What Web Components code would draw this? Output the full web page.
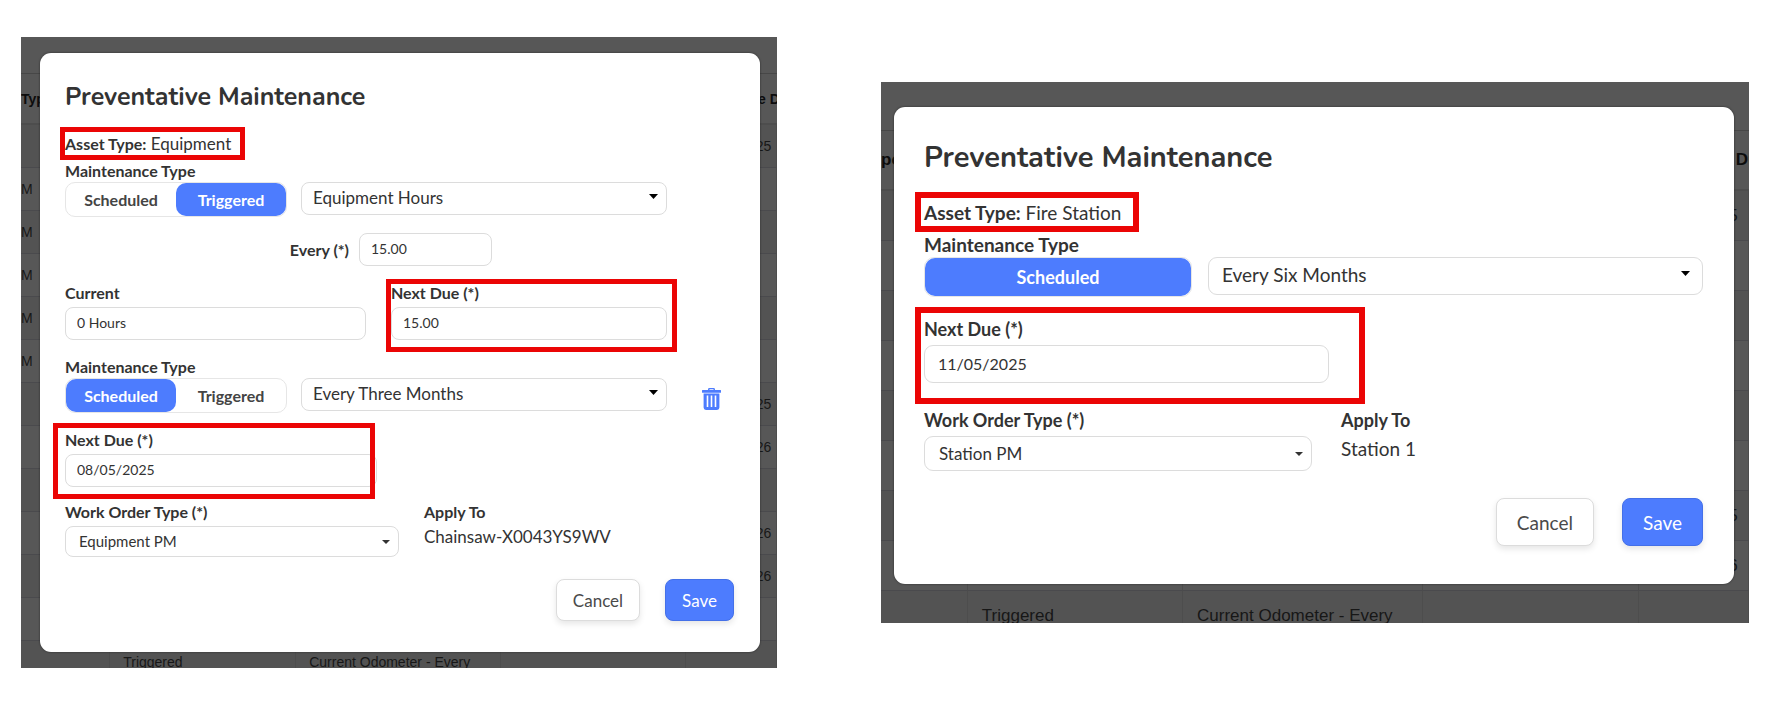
<!DOCTYPE html>
<html lang="en">
<head>
<meta charset="utf-8">
<title>Preventative Maintenance</title>
<style>
    body {
        margin: 0;
        padding: 37px 38px 37px 21px;
        display: grid;
        grid-template-columns: 756fr 868fr;
        column-gap: 104px;
        align-items: start;
        background: #fff;
        color: #333;
        font-family: Lato, sans-serif;
    }
    .equipment {
        --stage-pad: 16px 17px 16px 19px;
        --dialog-pad: 26px 26px 31px 25px;
        --title-size: 25px;
        --title-line: 36px;
        --title-gap: 17px;
        --radius: 8px;
        --label-size: 16px;
        --label-line: 22px;
        --lead-size: 16px;
        --text-size: 17px;
        --input-size: 14px;
        --input-height: 33px;
        --input-pad: 11px;
        --arrow-right: 9px;
        --arrow-top: 12px;
        --toggle-height: 35px;
        --compact-height: 31px;
        --compact-pad: 13px;
        --compact-size: 15px;
        --button-height: 42px;
        --button-pad: 16px;
        --button-gap: 25px;
        --actions-gap: 22px;
        --frame: 5px;
        --table-size: 14px;
        --table-top: 36px;
        --head-height: 52px;
        --row-height: 43px;
        --cell-pad: 13px;
        --last-pad: 15px;
    }
    .station {
        margin-top: 45px;
        --stage-pad: 25px 15px 39px 13px;
        --dialog-pad: 29px 31px 38px 30px;
        --title-size: 29px;
        --title-line: 44px;
        --title-gap: 19px;
        --radius: 9px;
        --label-size: 18px;
        --label-line: 25px;
        --lead-size: 19px;
        --text-size: 19px;
        --input-size: 16px;
        --input-height: 38px;
        --input-pad: 13px;
        --arrow-right: 13px;
        --arrow-top: 14px;
        --toggle-height: 40px;
        --compact-height: 35px;
        --compact-pad: 14px;
        --compact-size: 17px;
        --button-height: 48px;
        --button-pad: 20px;
        --button-gap: 28px;
        --actions-gap: 27px;
        --frame: 6px;
        --table-size: 17px;
        --table-top: 48px;
        --head-height: 61px;
        --row-height: 50px;
        --cell-pad: 14px;
        --last-pad: 14px;
    }
    .asset {
        width: fit-content;
        font-size: var(--text-size);
        line-height: 24px;
    }
    .station .asset {
        line-height: 28px;
    }
    .asset b {
        font-size: var(--lead-size);
    }
    .form {
        display: flex;
        flex-direction: column;
        gap: 16px;
        margin: 4px 0 14px;
    }
    .station .form {
        gap: 20px;
        margin: 5px 0 25px;
    }
    .every { display: grid; grid-template-columns: 427fr 242fr; }
    .pair { display: grid; grid-template-columns: 301fr 276fr 42fr; column-gap: 25px; }
    .single { display: grid; grid-template-columns: 312fr 357fr; }
    .station .single { grid-template-columns: 405fr 374fr; }
    .order { display: grid; grid-template-columns: 334fr 310fr; column-gap: 25px; }
    .station .order { grid-template-columns: 388fr 362fr; column-gap: 29px; }
</style>
</head>
<body>

<pm-stage class="equipment" columns="11.8|24.6|27.1|24.5" first="|M|M|M|M|M|||||||" dates="08/05/2025||||||08/05/2025|02/05/2026||02/05/2026|02/05/2026||">
    <pm-dialog heading="Preventative Maintenance">
        <pm-callout class="asset" style="--inset: -5px -14px -4px -5px"><b>Asset Type:</b> Equipment</pm-callout>
        <div class="form">
            <pm-trigger options="Scheduled|Triggered" active="Triggered" value="Equipment Hours" style="--columns: 222fr 366fr 53fr; --gap: 14px"></pm-trigger>
            <div class="every"><pm-field label="Every (*)" value="15.00" inline></pm-field></div>
            <div class="pair">
                <pm-field label="Current" value="0 Hours"></pm-field>
                <pm-callout style="--inset: -3px -10px -12px -5px"><pm-field label="Next Due (*)" value="15.00"></pm-field></pm-callout>
            </div>
            <pm-trigger options="Scheduled|Triggered" active="Scheduled" value="Every Three Months" style="--columns: 222fr 366fr 53fr; --gap: 14px">
                <pm-trash></pm-trash>
            </pm-trigger>
            <div class="single">
                <pm-callout style="--inset: -6px 2px -12px -12px"><pm-field label="Next Due (*)" value="08/05/2025"></pm-field></pm-callout>
            </div>
        </div>
        <div class="order">
            <pm-order label="Work Order Type (*)" value="Equipment PM"></pm-order>
            <pm-info label="Apply To">Chainsaw-X0043YS9WV</pm-info>
        </div>
        <pm-button slot="actions">Cancel</pm-button>
        <pm-button slot="actions" primary>Save</pm-button>
    </pm-dialog>
</pm-stage>

<pm-stage class="station" head="pe" columns="10|24.8|27.7|24.8" first="||||||||" dates="08/05/2025||||||08/05/2025|02/05/2026|">
    <pm-dialog heading="Preventative Maintenance">
        <pm-callout class="asset" style="--inset: -7px -18px -5px -9px"><b>Asset Type:</b> Fire Station</pm-callout>
        <div class="form">
            <pm-trigger options="Scheduled" active="Scheduled" value="Every Six Months" style="--columns: 268fr 495fr; --gap: 16px"></pm-trigger>
            <div class="single">
                <pm-callout style="--inset: -10px -36px -21px -9px"><pm-field label="Next Due (*)" value="11/05/2025"></pm-field></pm-callout>
            </div>
        </div>
        <div class="order">
            <pm-order label="Work Order Type (*)" value="Station PM"></pm-order>
            <pm-info label="Apply To">Station 1</pm-info>
        </div>
        <pm-button slot="actions">Cancel</pm-button>
        <pm-button slot="actions" primary>Save</pm-button>
    </pm-dialog>
</pm-stage>

<script>
    class PmElement extends HTMLElement {
        connectedCallback() {
            if (this.shadowRoot) return;
            this.shadow = this.attachShadow({mode: 'open'});
            this.shadow.innerHTML = this.render();
        }
        attr(name) {
            return this.getAttribute(name) || "";
        }
    }

    const labelStyle = `
        .label {
            display: block;
            font-size: var(--label-size);
            line-height: var(--label-line);
            font-weight: 700;
            white-space: nowrap;
        }
    `;

    const selectStyle = `
        .select {
            position: relative;
            display: block;
        }
        select {
            display: block;
            box-sizing: border-box;
            width: 100%;
            margin: 0;
            border: 1px solid #dcdcdc;
            border-radius: var(--radius);
            background: #fff;
            color: #333;
            font-family: inherit;
            appearance: none;
        }
        .select svg {
            position: absolute;
            pointer-events: none;
        }
    `;

    // dimmed page with the records table behind the dialog
    class PmStage extends PmElement {
        render() {
            const first = this.attr("first").split("|");
            const dates = this.attr("dates").split("|");
            const cols = this.attr("columns").split("|").map(width => `<col style="width: ${width}%">`).join("");
            const rows = first.map((text, i) => {
                const last = i === first.length - 1;
                return `<tr><td>${text}</td><td>${last ? "Triggered" : ""}</td><td>${last ? "Current Odometer - Every" : ""}</td><td></td><td>${dates[i]}</td></tr>`;
            }).join("");
            return `
                <style>
                    :host {
                        display: block;
                        position: relative;
                        overflow: hidden;
                        padding: var(--stage-pad);
                        background: #575757;
                    }
                    .page {
                        position: absolute;
                        inset: 0;
                        overflow: hidden;
                        padding-top: var(--table-top);
                    }
                    table {
                        width: 100%;
                        table-layout: fixed;
                        border-collapse: separate;
                        border-spacing: 0;
                        font: var(--table-size) "Liberation Sans", sans-serif;
                        color: #171717;
                    }
                    th, td {
                        box-sizing: border-box;
                        height: var(--row-height);
                        padding: 0 0 0 var(--cell-pad);
                        border-right: 1px solid #4d4d4d;
                        border-bottom: 1px solid #4a4a4d;
                        text-align: left;
                        white-space: nowrap;
                    }
                    th {
                        height: var(--head-height);
                        color: #0c0c0c;
                        border-right: 0;
                        border-top: 1px solid #474747;
                        border-bottom: 2px solid #4d4d4d;
                    }
                    th:first-child, td:first-child { padding-left: 0; }
                    th:last-child, td:last-child { padding-left: var(--last-pad); }
                    tbody tr:nth-child(odd) { background: #535353; }
                    .front { position: relative; }
                </style>
                <div class="page">
                    <table>
                        <colgroup>${cols}<col></colgroup>
                        <thead><tr><th>${this.attr("head") || "Type"}</th><th></th><th></th><th></th><th>Next Date Due</th></tr></thead>
                        <tbody>${rows}</tbody>
                    </table>
                </div>
                <div class="front"><slot></slot></div>
            `;
        }
    }

    class PmDialog extends PmElement {
        render() {
            return `
                <style>
                    :host {
                        display: block;
                        padding: var(--dialog-pad);
                        border-radius: 11px;
                        background: #fff;
                        box-shadow: 0 0 2px #222;
                    }
                    h2 {
                        margin: 0 0 var(--title-gap);
                        font-family: Nunito, Lato, sans-serif;
                        font-size: var(--title-size);
                        line-height: var(--title-line);
                        font-weight: 700;
                    }
                    footer {
                        display: flex;
                        justify-content: flex-end;
                        gap: var(--button-gap);
                        margin-top: var(--actions-gap);
                    }
                </style>
                <section role="dialog" aria-label="${this.attr("heading")}">
                    <h2>${this.attr("heading")}</h2>
                    <slot></slot>
                    <footer><slot name="actions"></slot></footer>
                </section>
            `;
        }
    }

    // red frame drawn over whatever it wraps
    class PmCallout extends PmElement {
        render() {
            return `
                <style>
                    :host {
                        display: block;
                        position: relative;
                    }
                    .frame {
                        position: absolute;
                        inset: var(--inset);
                        border: var(--frame) solid #eb0505;
                        pointer-events: none;
                    }
                </style>
                <slot></slot>
                <div class="frame"></div>
            `;
        }
    }

    class PmField extends PmElement {
        render() {
            return `
                <style>
                    ${labelStyle}
                    :host { display: block; }
                    .label { margin-bottom: 3px; }
                    input {
                        display: block;
                        box-sizing: border-box;
                        width: 100%;
                        height: var(--input-height);
                        margin: 0;
                        padding: 0 var(--input-pad) 2px;
                        border: 1px solid #dcdcdc;
                        border-radius: var(--radius);
                        background: #fff;
                        color: #333;
                        font-family: inherit;
                        font-size: var(--input-size);
                    }
                    :host([inline]) .field {
                        display: grid;
                        grid-template-columns: 284fr 133fr;
                        column-gap: 10px;
                        align-items: center;
                    }
                    :host([inline]) .label {
                        margin: 0;
                        text-align: right;
                    }
                </style>
                <div class="field">
                    <label class="label" for="input">${this.attr("label")}</label>
                    <input id="input" type="text" value="${this.attr("value")}">
                </div>
            `;
        }
    }

    // maintenance type toggle with its frequency or meter select
    class PmTrigger extends PmElement {
        render() {
            const active = this.attr("active");
            const buttons = this.attr("options").split("|").map(name =>
                `<button type="button" aria-pressed="${name === active}">${name}</button>`).join("");
            return `
                <style>
                    ${labelStyle}
                    ${selectStyle}
                    :host { display: block; }
                    .label { font-size: var(--lead-size); }
                    .row {
                        display: grid;
                        grid-template-columns: var(--columns);
                        column-gap: var(--gap);
                        align-items: start;
                    }
                    .toggle {
                        display: flex;
                        box-sizing: border-box;
                        height: var(--toggle-height);
                        border: 1px solid #e6e6e6;
                        border-radius: 10px;
                    }
                    button {
                        flex: 1;
                        margin: 0;
                        padding: 0;
                        border: 0;
                        border-radius: 10px;
                        background: none;
                        color: #444;
                        font-family: inherit;
                        font-size: var(--label-size);
                        font-weight: 700;
                    }
                    button[aria-pressed="true"] {
                        background: #4d7cfe;
                        color: #fff;
                    }
                    select {
                        height: var(--input-height);
                        padding: 0 28px 3px var(--input-pad);
                        font-size: var(--text-size);
                    }
                    .select svg {
                        right: var(--arrow-right);
                        top: var(--arrow-top);
                    }
                </style>
                <span class="label" id="label">Maintenance Type</span>
                <div class="row">
                    <div class="toggle" role="group" aria-labelledby="label">${buttons}</div>
                    <div class="select">
                        <select aria-label="Maintenance trigger"><option>${this.attr("value")}</option></select>
                        <svg width="9" height="5" viewBox="0 0 9 5"><path d="M0 0h9L4.500 5z" fill="#000"/></svg>
                    </div>
                    <slot></slot>
                </div>
            `;
        }
        connectedCallback() {
            super.connectedCallback();
            const buttons = this.shadowRoot.querySelectorAll("button");
            buttons.forEach(button => button.addEventListener("click", () => {
                buttons.forEach(other => other.setAttribute("aria-pressed", other === button));
            }));
        }
    }

    class PmOrder extends PmElement {
        render() {
            return `
                <style>
                    ${labelStyle}
                    ${selectStyle}
                    :host { display: block; }
                    .label { margin-bottom: 3px; }
                    select {
                        height: var(--compact-height);
                        padding: 0 28px 1px var(--compact-pad);
                        font-size: var(--compact-size);
                    }
                    .select svg {
                        right: 9px;
                        top: calc(50% - 2px);
                    }
                </style>
                <label class="label" for="order">${this.attr("label")}</label>
                <div class="select">
                    <select id="order"><option>${this.attr("value")}</option></select>
                    <svg width="8" height="4" viewBox="0 0 8 4"><path d="M0 0h8L4 4z" fill="#333"/></svg>
                </div>
            `;
        }
    }

    class PmInfo extends PmElement {
        render() {
            return `
                <style>
                    ${labelStyle}
                    :host { display: block; }
                    .value {
                        margin-top: 3px;
                        font-size: var(--text-size);
                        line-height: var(--label-line);
                    }
                </style>
                <span class="label">${this.attr("label")}</span>
                <div class="value"><slot></slot></div>
            `;
        }
    }

    class PmTrash extends PmElement {
        render() {
            return `
                <style>
                    :host { display: block; }
                    button {
                        display: block;
                        margin: 10px 0 0 21px;
                        padding: 0;
                        border: 0;
                        background: none;
                    }
                    svg { display: block; }
                </style>
                <button type="button" aria-label="Delete">
                    <svg width="19" height="22" viewBox="0 0 19 22">
                        <path fill="#4d7cfe" fill-rule="evenodd" d="M6 2V1.400Q6 0 7.400 0h4.200Q13 0 13 1.400V2h5.500q.5 0 .5.500v1.800q0 .5-.5.500H.500q-.5 0-.5-.5V2.500Q0 2 .500 2zM7.500 2h4V1.200h-4zM1.600 5.600h15.800v14q0 2.400-2.400 2.400H4q-2.400 0-2.400-2.400zM4.700 7.600v11.400h1.600V7.600zM8.700 7.600v11.400h1.600V7.600zM12.700 7.600v11.400h1.600V7.600z"/>
                    </svg>
                </button>
            `;
        }
    }

    class PmButton extends PmElement {
        render() {
            return `
                <style>
                    :host { display: block; }
                    button {
                        display: block;
                        box-sizing: border-box;
                        height: var(--button-height);
                        margin: 0;
                        padding: 0 var(--button-pad);
                        border: 1px solid #dcdcdc;
                        border-radius: 8px;
                        background: #fff;
                        box-shadow: 0 3px 6px rgba(0, 0, 0, .1);
                        color: #4a4a4a;
                        font-family: inherit;
                        font-size: var(--text-size);
                    }
                    :host([primary]) button {
                        border-color: #4470e8;
                        background: #4d7cfe;
                        color: #fff;
                    }
                </style>
                <button type="button"><slot></slot></button>
            `;
        }
    }

    window.customElements.define('pm-stage', PmStage);
    window.customElements.define('pm-dialog', PmDialog);
    window.customElements.define('pm-callout', PmCallout);
    window.customElements.define('pm-field', PmField);
    window.customElements.define('pm-trigger', PmTrigger);
    window.customElements.define('pm-order', PmOrder);
    window.customElements.define('pm-info', PmInfo);
    window.customElements.define('pm-trash', PmTrash);
    window.customElements.define('pm-button', PmButton);
</script>
</body>
</html>
